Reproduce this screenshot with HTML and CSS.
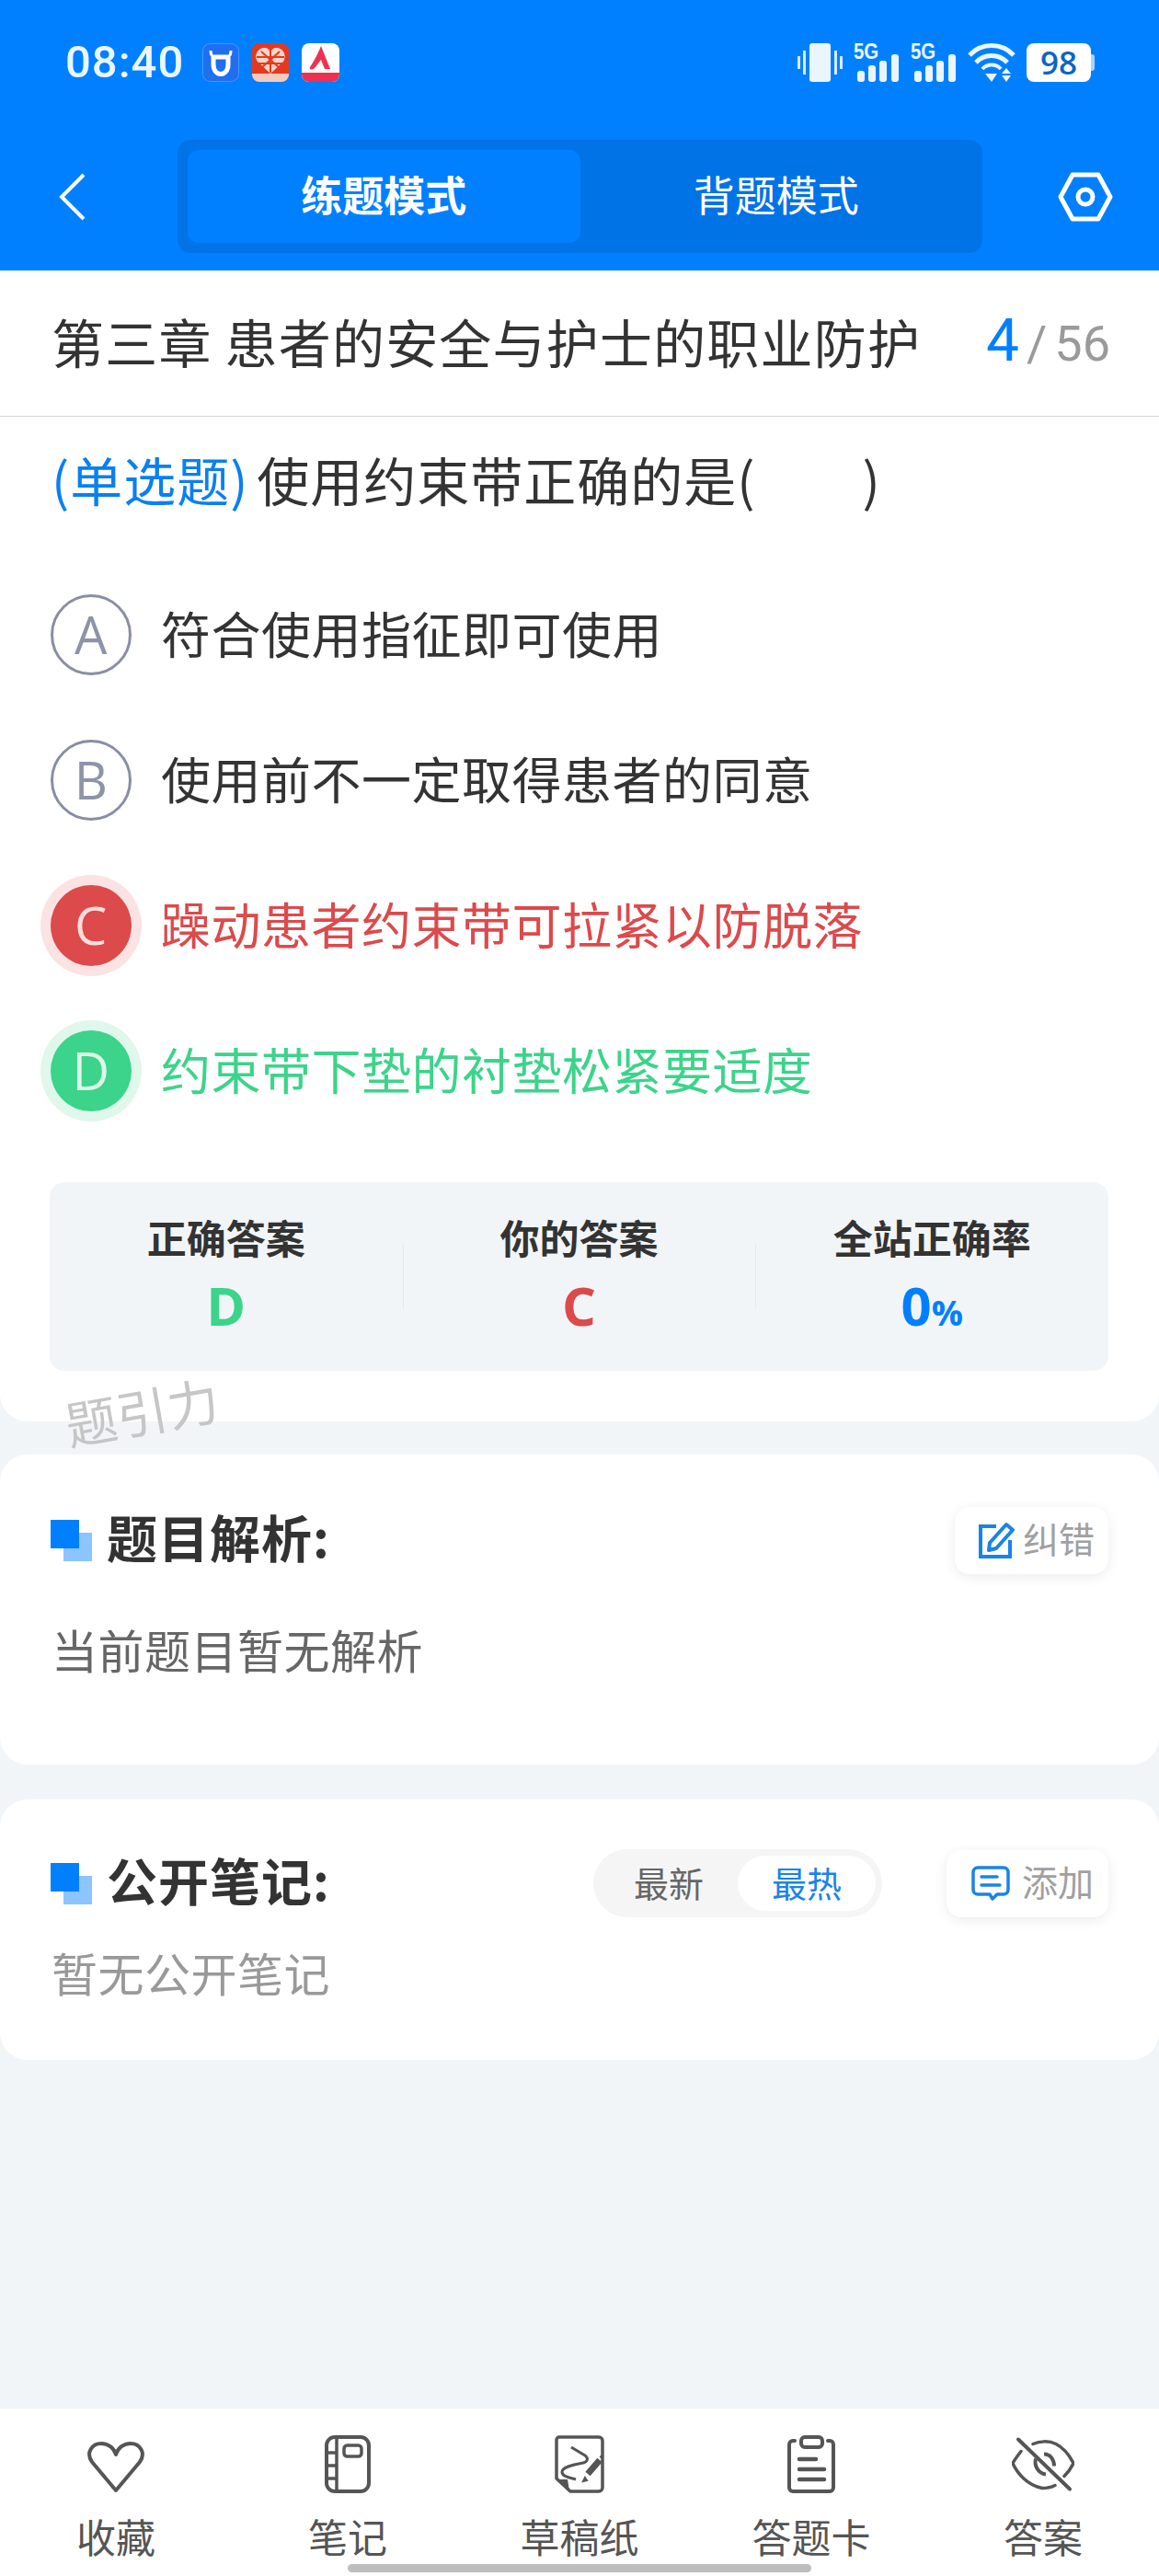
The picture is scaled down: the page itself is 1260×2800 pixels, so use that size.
FILE: index.html
```html
<!DOCTYPE html>
<html lang="zh-CN">
<head>
    <meta charset="UTF-8">
    <meta name="viewport" content="width=device-width, initial-scale=1.0">
    <title>练题模式</title>
    <link rel="stylesheet" href="styles.css">
</head>
<body>
<div class="page">
    <header class="top">
        <div class="status">
            <span class="time">08:40</span>
            <svg class="app" width="40" height="42" viewBox="0 0 40 42">
                <rect x="0.500" y="0.500" width="39" height="41" rx="8" fill="#1f6ff0" stroke="#4d94ff"/>
                <path d="M9 8 C9 13 11 15 14 15 H26 C29 15 31 13 31 8" fill="none" stroke="#fff" stroke-width="3"/>
                <path d="M12 15 V23 C12 37 28 37 28 23 V15 M12 15 H28" fill="none" stroke="#fff" stroke-width="5"/>
            </svg>
            <svg class="app" width="40" height="42" viewBox="0 0 40 42">
                <rect width="40" height="42" rx="8" fill="#e5391f"/>
                <path d="M0 33 H40 V34 A8 8 0 0 1 32 42 H8 A8 8 0 0 1 0 34 Z" fill="#f6c9bd"/>
                <path d="M20 33 L6 20 C1 12 8 4 14 5 C17 5 19 7 20 10 C21 7 23 5 26 5 C32 4 39 12 34 20 Z" fill="#f7d5c9"/>
                <path d="M10 9 L30 27 M30 9 L10 27 M20 8 V32 M5 15 H35 M6 22 H34" stroke="#e5391f" stroke-width="2"/>
            </svg>
            <svg class="app" width="41" height="42" viewBox="0 0 41 42">
                <rect width="41" height="42" rx="8" fill="#fff"/>
                <path d="M0 32 H41 V34 A8 8 0 0 1 33 42 H8 A8 8 0 0 1 0 34 Z" fill="#ee3150"/>
                <path d="M21 3 L31 28 L25 28 L21 18 L14 27 C10 30 8 28 9 26 C12 21 16 15 21 3 Z" fill="#ee3150"/>
            </svg>
            <div class="status-right">
                <svg width="49" height="42" viewBox="0 0 49 42">
                    <rect x="13" y="0" width="23" height="42" rx="3" fill="#e9f6ff"/>
                    <path d="M1.500 14 V28 M7.500 8 V34 M41.500 8 V34 M47.500 14 V28" stroke="#d5ecff" stroke-width="3"/>
                </svg>
                <div class="signal">
                    <span class="five-g">5G</span>
                    <svg width="48" height="30" viewBox="0 0 48 30">
                        <rect x="2" y="18" width="8" height="12" rx="3" fill="#e9f6ff"/>
                        <rect x="14" y="12" width="8" height="18" rx="3" fill="#e9f6ff"/>
                        <rect x="26" y="7" width="8" height="23" rx="3" fill="#e9f6ff"/>
                        <rect x="39" y="0" width="8" height="30" rx="3" fill="#e9f6ff"/>
                    </svg>
                </div>
                <div class="signal">
                    <span class="five-g">5G</span>
                    <svg width="48" height="30" viewBox="0 0 48 30">
                        <rect x="2" y="18" width="8" height="12" rx="3" fill="#e9f6ff"/>
                        <rect x="14" y="12" width="8" height="18" rx="3" fill="#e9f6ff"/>
                        <rect x="26" y="7" width="8" height="23" rx="3" fill="#e9f6ff"/>
                        <rect x="39" y="0" width="8" height="30" rx="3" fill="#e9f6ff"/>
                    </svg>
                </div>
                <svg width="52" height="42" viewBox="0 0 52 42">
                    <path d="M2 13 C15 -1 37 -1 50 13" fill="none" stroke="#e9f6ff" stroke-width="5"/>
                    <path d="M9 21 C18 11 34 11 43 21" fill="none" stroke="#e9f6ff" stroke-width="5"/>
                    <path d="M16 28 C21 22 31 22 36 28" fill="none" stroke="#e9f6ff" stroke-width="4"/>
                    <path d="M19 33 H32 L26 42 Z M42 27 L47 33 H37 Z M37 35 H47 L42 42 Z" fill="#e9f6ff"/>
                </svg>
                <div class="battery"><span class="battery-num">98</span><i class="battery-cap"></i></div>
            </div>
        </div>
        <nav class="nav">
            <svg class="back" width="29" height="52" viewBox="0 0 29 52">
                <path d="M27 2 L3 26 L27 50" fill="none" stroke="#fff" stroke-width="4"/>
            </svg>
            <div class="mode">
                <div class="mode-item active">练题模式</div>
                <div class="mode-item">背题模式</div>
            </div>
            <svg class="setting" width="60" height="54" viewBox="0 0 60 54">
                <path d="M16 3 H44 L57 27 L44 51 H16 L3 27 Z" fill="none" stroke="#fff" stroke-width="5" stroke-linejoin="round"/>
                <circle cx="30" cy="27" r="8" fill="none" stroke="#fff" stroke-width="5"/>
            </svg>
        </nav>
    </header>

    <section class="card question-card">
        <div class="chapter">
            <span class="chapter-name">第三章 患者的安全与护士的职业防护</span>
            <span class="count"><b>4</b><i>/</i>56</span>
        </div>
        <div class="question"><span class="q-type">(单选题)</span> 使用约束带正确的是(<span class="q-blank"></span>)</div>
        <div class="option"><span class="letter">A</span><span class="opt-text">符合使用指征即可使用</span></div>
        <div class="option"><span class="letter">B</span><span class="opt-text">使用前不一定取得患者的同意</span></div>
        <div class="option wrong"><span class="letter">C</span><span class="opt-text">躁动患者约束带可拉紧以防脱落</span></div>
        <div class="option right"><span class="letter">D</span><span class="opt-text">约束带下垫的衬垫松紧要适度</span></div>
        <div class="stats">
            <div class="stat">
                <div class="stat-label">正确答案</div>
                <div class="stat-value green">D</div>
            </div>
            <div class="stat">
                <div class="stat-label">你的答案</div>
                <div class="stat-value red">C</div>
            </div>
            <div class="stat">
                <div class="stat-label">全站正确率</div>
                <div class="stat-value blue">0<small>%</small></div>
            </div>
        </div>
    </section>
    <div class="watermark">题引力</div>

    <section class="card analysis-card">
        <div class="card-head">
            <i class="marker"></i>
            <h2 class="card-title">题目解析:</h2>
            <div class="small-btn fix-btn">
                <svg width="40" height="40" viewBox="0 0 40 40">
                    <path d="M20 5 H3 V38 H35 V20" fill="none" stroke="#1a84e6" stroke-width="4"/>
                    <path d="M31 3 L38 9 L20 29 L12 31 L13 23 Z" fill="none" stroke="#1a84e6" stroke-width="4" stroke-linejoin="round"/>
                </svg>
                <span class="btn-text">纠错</span>
            </div>
        </div>
        <p class="analysis-text">当前题目暂无解析</p>
    </section>

    <section class="card notes-card">
        <div class="card-head">
            <i class="marker"></i>
            <h2 class="card-title">公开笔记:</h2>
            <div class="sort">
                <span class="sort-item">最新</span>
                <span class="sort-item on">最热</span>
            </div>
            <div class="small-btn add-btn">
                <svg width="42" height="38" viewBox="0 0 42 38">
                    <path d="M7 2 H35 A5 5 0 0 1 40 7 V26 A5 5 0 0 1 35 31 H28 L23 36 L20 31 H7 A5 5 0 0 1 2 26 V7 A5 5 0 0 1 7 2 Z" fill="none" stroke="#1a84e6" stroke-width="3.500" stroke-linejoin="round"/>
                    <path d="M11 12 H28 M11 21 H31" stroke="#1a84e6" stroke-width="3.500" stroke-linecap="round"/>
                </svg>
                <span class="btn-text">添加</span>
            </div>
        </div>
        <p class="notes-empty">暂无公开笔记</p>
    </section>

    <footer class="tabs">
        <div class="tab">
            <svg width="64" height="56" viewBox="0 0 64 56">
                <path d="M32 53 L6 22 C-1 12 6 2 16 2 C24 2 30 7 32 14 C34 7 40 2 48 2 C58 2 65 12 58 22 Z" fill="none" stroke="#555" stroke-width="4" stroke-linejoin="round"/>
            </svg>
            <span class="tab-text">收藏</span>
        </div>
        <div class="tab">
            <svg width="50" height="63" viewBox="0 0 50 63">
                <rect x="2" y="2" width="46" height="59" rx="9" fill="none" stroke="#555" stroke-width="4"/>
                <path d="M13 2 V61 M2 19 H13 M2 33 H13 M2 47 H13" stroke="#555" stroke-width="3.500"/>
                <rect x="21" y="11" width="19" height="12" rx="3.500" fill="none" stroke="#555" stroke-width="3.500"/>
            </svg>
            <span class="tab-text">笔记</span>
        </div>
        <div class="tab">
            <svg width="54" height="63" viewBox="0 0 54 63">
                <path d="M5 2 H48 A4 4 0 0 1 52 6 V57 A4 4 0 0 1 48 61 H17 L2 47 V5 A3 3 0 0 1 5 2 Z" fill="none" stroke="#555" stroke-width="3.500" stroke-linejoin="round"/>
                <path d="M3 48 L14 48 L16 60 Z" fill="#555"/>
                <path d="M18 13 L33 22 C37 25 36 29 31 30 C21 32 8 34 8 40 C8 45 16 46 23 48" fill="none" stroke="#555" stroke-width="3"/>
                <path d="M49 27 L36 42" stroke="#555" stroke-width="7"/>
                <path d="M33 46 L31 50 L35 49 Z" fill="#555" stroke="#555" stroke-width="2"/>
                <path d="M50 22 L52 24" stroke="#555" stroke-width="4"/>
            </svg>
            <span class="tab-text">草稿纸</span>
        </div>
        <div class="tab">
            <svg width="54" height="63" viewBox="0 0 54 63">
                <path d="M9 6 H7 A4 4 0 0 0 3 10 V57 A4 4 0 0 0 7 61 H47 A4 4 0 0 0 51 57 V10 A4 4 0 0 0 47 6 H45" fill="none" stroke="#555" stroke-width="4" stroke-linecap="round"/>
                <rect x="16" y="2" width="23" height="11" rx="4" fill="none" stroke="#555" stroke-width="4"/>
                <path d="M14 26 H32 M14 37 H41 M14 48 H41" stroke="#555" stroke-width="4.500" stroke-linecap="round"/>
            </svg>
            <span class="tab-text">答题卡</span>
        </div>
        <div class="tab">
            <svg width="68" height="63" viewBox="0 0 68 56">
                <path d="M23 6 C30 3 40 2 48 6 C56 10 63 19 67 27 C64 33 60 38 57 41 M10 14 C7 18 3 23 1 27 C6 38 17 51 33 54 C38 54 43 53 47 51" fill="none" stroke="#555" stroke-width="3.500" stroke-linecap="round"/>
                <path d="M7 1 L63 55" stroke="#555" stroke-width="4" stroke-linecap="round"/>
                <path d="M26 22 C24 30 29 38 37 39 M35 17 C42 17 46 23 46 30" fill="none" stroke="#555" stroke-width="4"/>
            </svg>
            <span class="tab-text">答案</span>
        </div>
    </footer>
    <div class="home-bar"></div>
</div>
</body>
</html>
```

FILE: styles.css
```css
* {
    box-sizing: border-box;
}
body {
    margin: 0;
    font-family: "Noto Sans CJK SC", "Noto Sans", sans-serif;
    color: #333;
    background-color: #f2f5f8;
}
.page {
    position: relative;
    width: 1260px;
    height: 2800px;
    display: flex;
    flex-direction: column;
    overflow: hidden;
}

/* header */
.top {
    height: 294px;
    flex: none;
    background-color: #0080ff;
}
.status {
    height: 152px;
    padding: 47px 70px 0 71px;
    display: flex;
    align-items: flex-start;
}
.time {
    width: 129px;
    margin-right: 20px;
    font-family: Roboto, sans-serif;
    font-size: 49px;
    font-weight: 500;
    line-height: 42px;
    letter-spacing: 1px;
    color: #e9f6ff;
}
.app {
    margin-right: 14px;
}
.status-right {
    margin-left: auto;
    display: flex;
    align-items: flex-start;
    gap: 12px;
}
.signal {
    width: 50px;
    height: 42px;
    position: relative;
    display: flex;
    align-items: flex-end;
    justify-content: flex-end;
}
.five-g {
    position: absolute;
    left: 0;
    top: -3px;
    font-family: "Liberation Sans", sans-serif;
    font-size: 24px;
    line-height: 24px;
    font-weight: bold;
    color: #e9f6ff;
    transform: scaleX(0.85);
    transform-origin: left;
}
.battery {
    width: 74px;
    height: 42px;
    display: flex;
    align-items: center;
}
.battery-num {
    width: 70px;
    height: 42px;
    background-color: #fff;
    border-radius: 8px;
    color: #0a66c2;
    font-family: "Open Sans", sans-serif;
    font-size: 35px;
    font-weight: 600;
    line-height: 42px;
    text-align: center;
}
.battery-cap {
    width: 4px;
    height: 18px;
    background-color: #a9d4ff;
    border-radius: 0 3px 3px 0;
}
.nav {
    padding-left: 64px;
    display: flex;
    align-items: center;
}
.back {
    flex: none;
}
.mode {
    width: 875px;
    height: 123px;
    margin-left: 100px;
    padding: 11px;
    background-color: #0073e6;
    border-radius: 14px;
    display: flex;
}
.mode-item {
    flex: 1;
    height: 101px;
    border-radius: 12px;
    color: #fff;
    font-size: 45px;
    line-height: 96px;
    text-align: center;
}
.mode-item.active {
    background-color: #0080ff;
    font-weight: bold;
}
.setting {
    margin-left: 82px;
    flex: none;
}

/* cards */
.card {
    background-color: #fff;
    border-radius: 30px;
}
.question-card {
    height: 1251px;
    flex: none;
    border-radius: 0 0 30px 30px;
}
.chapter {
    height: 159px;
    padding: 0 53px 6px 56px;
    border-bottom: 1px solid #d8d8d8;
    display: flex;
    align-items: center;
    justify-content: space-between;
}
.chapter-name {
    font-size: 57px;
    letter-spacing: 1.200px;
    white-space: nowrap;
}
.count {
    font-family: Roboto, sans-serif;
    font-size: 54px;
    color: #9a9a9a;
}
.count b {
    font-size: 64px;
    font-weight: normal;
    color: #0080ff;
}
.count i {
    margin: 0 8px;
    font-style: normal;
}
.question {
    height: 158px;
    padding: 32px 0 0 56px;
    font-size: 57px;
    line-height: 70px;
    letter-spacing: 1px;
    word-spacing: -5px;
    white-space: nowrap;
}
.q-type {
    color: #0a80f0;
}
.q-blank {
    display: inline-block;
    width: 116px;
}
.option {
    height: 158px;
    padding-left: 55px;
    display: flex;
    align-items: center;
    font-size: 54px;
    letter-spacing: 0.500px;
    white-space: nowrap;
}
.opt-text {
    margin-bottom: 6px;
}
.letter {
    width: 88px;
    height: 88px;
    margin-right: 32px;
    flex: none;
    border: 3px solid #8a8ea3;
    border-radius: 50%;
    color: #8f93a8;
    font-family: "Open Sans", sans-serif;
    font-size: 56px;
    line-height: 80px;
    text-align: center;
}
.wrong {
    color: #dc4a4b;
}
.wrong .letter {
    background-color: #dc4a4b;
    border: none;
    color: #fbdcdc;
    line-height: 86px;
    box-shadow: 0 0 0 11px #fbe3e3;
}
.right {
    color: #3bd48a;
}
.right .letter {
    background-color: #3bd48a;
    border: none;
    color: #dff7eb;
    line-height: 86px;
    box-shadow: 0 0 0 11px #e0f7ec;
}
.stats {
    height: 205px;
    margin: 42px 55px 0 54px;
    padding-top: 31px;
    background-color: #f2f5f8;
    border-radius: 16px;
    display: flex;
}
.stat {
    flex: 1;
    position: relative;
    text-align: center;
}
.stat + .stat::before {
    content: "";
    position: absolute;
    left: 0;
    top: 36px;
    height: 71px;
    border-left: 1px solid #e6e9ec;
}
.stat-label {
    font-size: 43px;
    line-height: 56px;
    font-weight: bold;
}
.stat-value {
    margin-top: 12px;
    font-family: "Open Sans", sans-serif;
    font-size: 58px;
    line-height: 70px;
    font-weight: bold;
}
.stat-value small {
    font-size: 38px;
}
.green {
    color: #3bd48a;
}
.red {
    color: #dc4a4b;
}
.blue {
    color: #0080ff;
}
.watermark {
    position: absolute;
    left: 70px;
    top: 1498px;
    font-size: 56px;
    line-height: 70px;
    color: #c6c6c6;
    transform: rotate(-10deg);
}
.analysis-card {
    height: 337px;
    margin-top: 36px;
    flex: none;
}
.notes-card {
    height: 283px;
    margin-top: 38px;
    flex: none;
}
.card-head {
    height: 74px;
    padding: 0 55px;
    display: flex;
    align-items: center;
}
.analysis-card .card-head {
    margin-top: 56px;
}
.notes-card .card-head {
    margin-top: 54px;
}
.marker {
    width: 45px;
    height: 45px;
    margin-right: 16px;
    flex: none;
    background:
        linear-gradient(#0080ff, #0080ff) 0 0 / 31px 31px no-repeat,
        linear-gradient(#8cc4ff, #8cc4ff) 14px 14px / 31px 31px no-repeat;
}
.card-title {
    margin: 0 0 10px;
    font-size: 55px;
    font-weight: bold;
    line-height: 64px;
    letter-spacing: 1px;
    white-space: nowrap;
}
.small-btn {
    height: 73px;
    flex: none;
    margin-left: auto;
    background-color: #fff;
    border-radius: 16px;
    box-shadow: 0 3px 14px rgba(0, 0, 0, 0.08);
    display: flex;
    align-items: center;
    color: #a0a0a0;
    font-size: 39px;
    white-space: nowrap;
}
.btn-text {
    margin-bottom: 6px;
}
.fix-btn {
    width: 167px;
    padding-left: 25px;
    gap: 9px;
}
.add-btn {
    width: 176px;
    margin-left: 70px;
    padding-left: 27px;
    gap: 13px;
}
.analysis-text {
    margin: 45px 0 0 56px;
    font-size: 50px;
    line-height: 72px;
    letter-spacing: 0.500px;
    color: #666;
}
.notes-empty {
    margin: 23px 0 0 56px;
    font-size: 50px;
    line-height: 72px;
    letter-spacing: 0.500px;
    color: #999;
}
.sort {
    width: 314px;
    height: 74px;
    margin-left: auto;
    padding: 7px;
    background-color: #f5f5f5;
    border-radius: 37px;
    display: flex;
    font-size: 38px;
    color: #666;
}
.sort-item {
    flex: 1;
    line-height: 58px;
    text-align: center;
    border-radius: 30px;
}
.sort-item.on {
    background-color: #fff;
    color: #1a84e6;
}

/* bottom bar */
.tabs {
    height: 182px;
    margin-top: auto;
    flex: none;
    background-color: #fff;
    display: flex;
}
.tab {
    flex: 1;
    position: relative;
    text-align: center;
}
.tab svg {
    position: absolute;
    left: 0;
    right: 0;
    margin: 0 auto;
    bottom: 90px;
}
.tab-text {
    position: absolute;
    left: 0;
    right: 0;
    top: 110px;
    font-size: 43px;
    line-height: 56px;
    color: #555;
}
.home-bar {
    position: absolute;
    left: 378px;
    top: 2787px;
    width: 504px;
    height: 9px;
    background-color: #bebebe;
    border-radius: 5px;
}
```
